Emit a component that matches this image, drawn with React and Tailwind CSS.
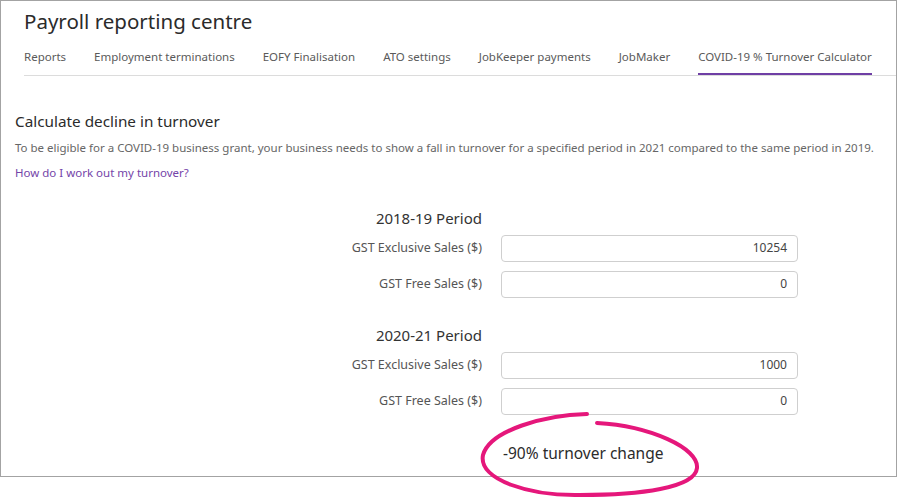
import React from 'react';

const tabs = [
  'Reports',
  'Employment terminations',
  'EOFY Finalisation',
  'ATO settings',
  'JobKeeper payments',
  'JobMaker',
  'COVID-19 % Turnover Calculator',
];

const Field = ({ label, value }) => (
  <>
    <label className="text-right text-[12.5px] text-[#555]">{label}</label>
    <div className="h-[27px] w-[297px] rounded-[4px] border border-[#cfcfcf] px-[10px] flex items-center justify-end text-[12px] text-[#444]">
      {value}
    </div>
  </>
);

const Period = ({ title, rows }) => (
  <div className="grid grid-cols-[467px_297px] gap-x-[19px] items-center">
    <h3 className="text-right text-[15px] text-[#333] h-[28px] leading-[28px]">{title}</h3>
    <div />
    <div className="col-span-2 h-[3px]" />
    {rows.map((r, i) => (
      <React.Fragment key={i}>
        <Field label={r.label} value={r.value} />
        {i < rows.length - 1 && <div className="col-span-2 h-[9px]" />}
      </React.Fragment>
    ))}
  </div>
);

const Circle = () => (
  <svg
    className="absolute left-[470px] top-[400px] pointer-events-none"
    width="240"
    height="98"
    viewBox="0 0 240 98"
    fill="none"
  >
    <path
      d="M117,14 C75,15 20,30 13,55 C8,80 60,96 110,95 C170,95 225,88 227,68 C229,48 180,26 127,23"
      stroke="#e5177b"
      strokeWidth="4"
      strokeLinecap="round"
    />
  </svg>
);

export default function App() {
  return (
    <div className="relative w-[897px] h-[498px] bg-white" style={{ fontFamily: '"Noto Sans", sans-serif' }}>
      <div className="w-[897px] h-[477px] border border-[#a3a3a3]">
        {/* Header */}
        <div className="px-[23px] pt-[4px]">
          <h1 className="text-[20.5px] leading-[32px] text-[#2b2b2b]">Payroll reporting centre</h1>
        </div>

        {/* Tabs */}
        <div className="ml-[23px] mt-[6px] flex gap-[28px] border-b border-[#dcdcdc]">
          {tabs.map((t, i) => (
            <div
              key={t}
              className={`h-[32px] whitespace-nowrap pt-[5px] text-[11.5px] text-[#5a5a5a] ${
                i === tabs.length - 1 ? 'border-b-2 border-[#6f3fa5] -mb-px' : ''
              }`}
            >
              {t}
            </div>
          ))}
        </div>

        {/* Content */}
        <div className="px-[14px] pt-[34px]">
          <h2 className="text-[15.3px] leading-[22px] text-[#2b2b2b]">Calculate decline in turnover</h2>
          <p className="mt-[7px] text-[11.5px] text-[#666] whitespace-nowrap">
            To be eligible for a COVID-19 business grant, your business needs to show a fall in turnover for a specified period in 2021 compared to the same period in 2019.
          </p>
          <a className="block mt-[8px] text-[11.5px] text-[#7444a8]">How do I work out my turnover?</a>

          <div className="mt-[22px]">
            <Period
              title="2018-19 Period"
              rows={[
                { label: 'GST Exclusive Sales ($)', value: '10254' },
                { label: 'GST Free Sales ($)', value: '0' },
              ]}
            />
          </div>
          <div className="mt-[23px]">
            <Period
              title="2020-21 Period"
              rows={[
                { label: 'GST Exclusive Sales ($)', value: '1000' },
                { label: 'GST Free Sales ($)', value: '0' },
              ]}
            />
          </div>

          <div className="mt-[27px] pl-[488px] text-[15.5px] text-[#2b2b2b]">-90% turnover change</div>
        </div>
      </div>
      <Circle />
    </div>
  );
}
